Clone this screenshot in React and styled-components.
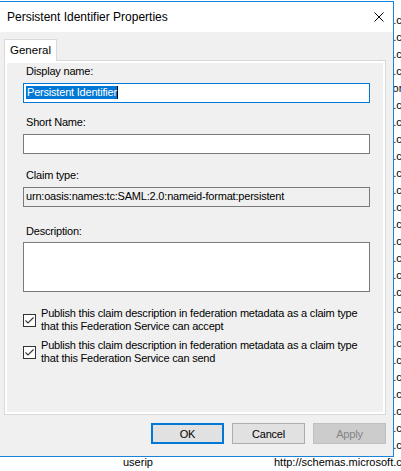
import styled, { createGlobalStyle } from 'styled-components';

const GlobalStyle = createGlobalStyle`
  html, body {
    margin: 0;
    padding: 0;
    background: #ffffff;
    overflow: hidden;
  }
  * {
    box-sizing: border-box;
  }
`;

const Desktop = styled.div`
  position: relative;
  width: 401px;
  height: 471px;
  overflow: hidden;
  background: #ffffff;
  font-family: "Liberation Sans", Arial, sans-serif;
`;

const ListBehind = styled.div`
  padding-top: 12px;
`;

const ListRow = styled.div`
  display: grid;
  grid-template-columns: 123px 151px 1fr;
  height: 17px;
  line-height: 17px;
  font-size: 11px;
  color: #000000;
  white-space: nowrap;
  overflow: hidden;
`;

const Window = styled.div`
  position: absolute;
  top: 1px;
  left: -1px;
  width: 395px;
  height: 456px;
  border: 1px solid #1883d7;
  background: #f0f0f0;
  display: flex;
  flex-direction: column;
`;

const TitleBar = styled.div`
  height: 30px;
  background: #ffffff;
  display: flex;
  align-items: center;
  justify-content: space-between;
  padding: 0 9px 0 7px;
`;

const Title = styled.div`
  font-size: 12px;
  color: #000000;
  line-height: 30px;
`;

const CloseIcon = () => (
  <svg width="10" height="10" viewBox="0 0 10 10" style={{ display: 'block' }}>
    <path d="M0.5 0.5 L9.5 9.5 M9.5 0.5 L0.5 9.5" stroke="#000" strokeWidth="1" fill="none" />
  </svg>
);

const Body = styled.div`
  flex: 1;
  display: flex;
  flex-direction: column;
  padding: 7px 7px 12px 4px;
`;

const TabStrip = styled.div`
  display: flex;
  position: relative;
  z-index: 1;
  margin-bottom: -1px;
`;

const Tab = styled.div`
  width: 53px;
  height: 22px;
  background: #ffffff;
  border: 1px solid #d9d9d9;
  border-bottom: none;
  font-size: 11.5px;
  color: #000000;
  display: flex;
  align-items: center;
  justify-content: center;
  padding-bottom: 1px;
`;

const TabPage = styled.div`
  height: 355px;
  border: 1px solid #d9d9d9;
  background: #ffffff;
  padding: 2px;
`;

const PageInner = styled.div`
  height: 100%;
  background: #f0f0f0;
  padding: 0 13px 0 16px;
  display: flex;
  flex-direction: column;
  font-size: 11px;
  letter-spacing: -0.2px;
  color: #000000;
`;

const Label = styled.div`
  height: 13px;
  line-height: 13px;
  padding-left: 3px;
  margin-top: ${(p) => p.$gap}px;
`;

const TextBox = styled.div`
  height: ${(p) => p.$height || 20}px;
  margin-top: ${(p) => p.$gap}px;
  border: 1px solid ${(p) => (p.$focused ? '#0078d7' : '#7a7a7a')};
  background: ${(p) => (p.$readOnly ? '#f0f0f0' : '#ffffff')};
  padding: 2px 0 0 2px;
  line-height: 13px;
  white-space: nowrap;
  overflow: hidden;
`;

const Selected = styled.span`
  display: inline-block;
  background: #0078d7;
  color: #ffffff;
  padding-left: 1px;
  border-right: 1px solid #000000;
`;

const CheckRow = styled.div`
  display: flex;
  align-items: center;
  gap: 5px;
  margin-top: ${(p) => p.$gap}px;
`;

const Box = styled.div`
  width: 13px;
  height: 13px;
  flex: none;
  border: 1px solid #333333;
  background: #ffffff;
  display: flex;
  align-items: center;
  justify-content: center;
`;

const CheckText = styled.div`
  line-height: 13px;
`;

const CheckMark = () => (
  <svg width="11" height="11" viewBox="0 0 11 11" style={{ display: 'block' }}>
    <path d="M1.5 5.5 L4 8 L9.5 2.5" stroke="#333" strokeWidth="1.1" fill="none" />
  </svg>
);

const ButtonRow = styled.div`
  display: flex;
  justify-content: flex-end;
  gap: 8px;
  margin-top: 8px;
`;

const Button = styled.div`
  width: 73px;
  height: 21px;
  display: flex;
  align-items: center;
  justify-content: center;
  font-size: 11px;
  letter-spacing: -0.2px;
  background: ${(p) => (p.$disabled ? '#cccccc' : '#e1e1e1')};
  color: ${(p) => (p.$disabled ? '#838383' : '#000000')};
  border: ${(p) =>
    p.$default ? '2px solid #0078d7' : p.$disabled ? '1px solid #bfbfbf' : '1px solid #adadad'};
`;

const rows = [
  ['emailaddress', 'http://schemas.microsoft.com/ws/2008/06/identity/claims/email'],
  ['group', 'http://schemas.microsoft.com/ws/2008/06/identity/claims/group'],
  ['upn', 'http://schemas.microsoft.com/ws/2008/06/identity/claims/upn'],
  ['commonname', 'http://schemas.microsoft.com/ws/2008/06/identity/claims/cn'],
  ['adfs1upn', 'http://schemas.xmlsoap.org/claims/UPN'],
  ['nameidentifier', 'http://schemas.microsoft.com/ws/2008/06/identity/claims/nameid'],
  ['authnmethod', 'http://schemas.microsoft.com/ws/2008/06/identity/claims/authn'],
  ['denyonlysid', 'http://schemas.microsoft.com/ws/2008/06/identity/claims/deny'],
  ['primarysid', 'http://schemas.microsoft.com/ws/2008/06/identity/claims/psid'],
  ['primarygroupsid', 'http://schemas.microsoft.com/ws/2008/06/identity/claims/pgsid'],
  ['groupsid', 'http://schemas.microsoft.com/ws/2008/06/identity/claims/gsid'],
  ['role', 'http://schemas.microsoft.com/ws/2008/06/identity/claims/role'],
  ['windowsaccountname', 'http://schemas.microsoft.com/ws/2008/06/identity/claims/wan'],
  ['devicecontext', 'http://schemas.microsoft.com/ws/2012/01/devicecontext'],
  ['isregistereduser', 'http://schemas.microsoft.com/ws/2012/01/isregistereduser'],
  ['deviceowner', 'http://schemas.microsoft.com/ws/2012/01/deviceowner'],
  ['deviceid', 'http://schemas.microsoft.com/ws/2012/01/deviceid'],
  ['registrationid', 'http://schemas.microsoft.com/ws/2012/01/registrationid'],
  ['displayname', 'http://schemas.microsoft.com/ws/2012/01/displayname'],
  ['os', 'http://schemas.microsoft.com/ws/2012/01/os'],
  ['osversion', 'http://schemas.microsoft.com/ws/2012/01/osversion'],
  ['ismanaged', 'http://schemas.microsoft.com/ws/2012/01/ismanaged'],
  ['forwardedclientip', 'http://schemas.microsoft.com/ws/2012/01/forwarded'],
  ['clientapplication', 'http://schemas.microsoft.com/ws/2012/01/clientapp'],
  ['clientuseragent', 'http://schemas.microsoft.com/ws/2012/01/useragent'],
  ['endpointpath', 'http://schemas.microsoft.com/ws/2012/01/endpoint'],
  ['userip', 'http://schemas.microsoft.com/ws/2012/01/userip'],
];

export default function App() {
  return (
    <>
      <GlobalStyle />
      <Desktop>
        <ListBehind>
          {rows.map(([name, uri]) => (
            <ListRow key={name}>
              <span />
              <span>{name}</span>
              <span>{uri}</span>
            </ListRow>
          ))}
        </ListBehind>

        <Window>
          <TitleBar>
            <Title>Persistent Identifier Properties</Title>
            <CloseIcon />
          </TitleBar>
          <Body>
            <TabStrip>
              <Tab>General</Tab>
            </TabStrip>
            <TabPage>
              <PageInner>
                <Label $gap={2}>Display name:</Label>
                <TextBox $gap={5} $focused>
                  <Selected>Persistent Identifier</Selected>
                </TextBox>

                <Label $gap={13}>Short Name:</Label>
                <TextBox $gap={5} />

                <Label $gap={15}>Claim type:</Label>
                <TextBox $gap={5} $readOnly>
                  urn:oasis:names:tc:SAML:2.0:nameid-format:persistent
                </TextBox>

                <Label $gap={18}>Description:</Label>
                <TextBox $gap={4} $height={50} />

                <CheckRow $gap={15}>
                  <Box>
                    <CheckMark />
                  </Box>
                  <CheckText>
                    Publish this claim description in federation metadata as a claim type
                    <br />
                    that this Federation Service can accept
                  </CheckText>
                </CheckRow>
                <CheckRow $gap={6}>
                  <Box>
                    <CheckMark />
                  </Box>
                  <CheckText>
                    Publish this claim description in federation metadata as a claim type
                    <br />
                    that this Federation Service can send
                  </CheckText>
                </CheckRow>
              </PageInner>
            </TabPage>
            <ButtonRow>
              <Button $default>OK</Button>
              <Button>Cancel</Button>
              <Button $disabled>Apply</Button>
            </ButtonRow>
          </Body>
        </Window>
      </Desktop>
    </>
  );
}
